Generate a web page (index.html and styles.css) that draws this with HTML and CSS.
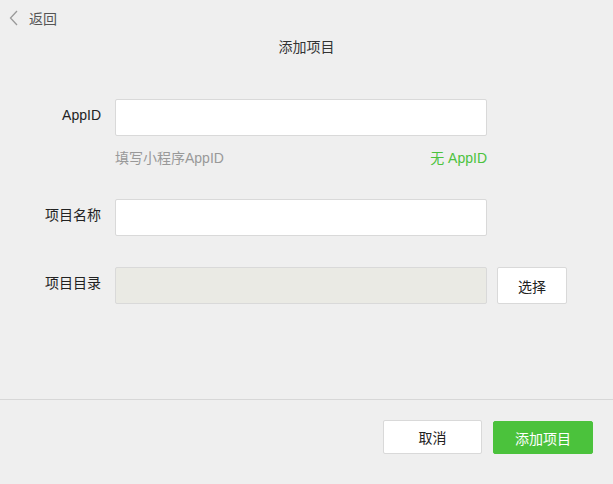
FILE: index.html
```html
<!DOCTYPE html>
<html lang="zh-CN">
  <head>
    <meta charset="UTF-8" />
    <title>添加项目</title>
    <link rel="stylesheet" href="styles.css">
  </head>
  <body>
    <div class="page">
      <div class="topbar">
        <a class="back" href="#">
          <svg width="10" height="16" viewBox="0 0 10 16"><polyline points="8,1 1.5,8 8,15" fill="none" stroke="#9a9a9a" stroke-width="1.3"/></svg>
          <span>返回</span>
        </a>
      </div>
      <div class="title">添加项目</div>

      <div class="form">
        <div class="row">
          <label class="label">AppID</label>
          <input class="field" type="text" />
        </div>
        <div class="hint">
          <span>填写小程序AppID</span>
          <a href="#" class="noid">无 AppID</a>
        </div>
        <div class="row gap">
          <label class="label">项目名称</label>
          <input class="field" type="text" />
        </div>
        <div class="row gap">
          <label class="label">项目目录</label>
          <input class="field disabled" type="text" disabled />
          <button class="btn pick">选择</button>
        </div>
      </div>

      <div class="footer">
        <button class="btn cancel">取消</button>
        <button class="btn primary">添加项目</button>
      </div>
    </div>
  </body>
</html>
```

FILE: styles.css
```css
body {
  margin: 0;
  background-color: #efefef;
  font-family: "Liberation Sans", "Noto Sans CJK SC", sans-serif;
  color: #333;
}
.page {
  width: 613px;
  height: 484px;
  display: flex;
  flex-direction: column;
}
.topbar {
  height: 36px;
  display: flex;
  align-items: center;
  padding-left: 9px;
}
.back {
  display: flex;
  align-items: center;
  color: #555;
  font-size: 14px;
  text-decoration: none;
}
.back svg {
  margin-right: 10px;
}
.title {
  margin-top: 1px;
  text-align: center;
  font-size: 14px;
  line-height: 20px;
  color: #333;
}
.form {
  margin-top: 42px;
}
.row {
  display: flex;
  align-items: flex-start;
}
.row.gap {
  margin-top: 31px;
}
.label {
  width: 101px;
  margin-right: 14px;
  padding-top: 6px;
  text-align: right;
  font-size: 14px;
  line-height: 20px;
  color: #222;
}
.field {
  box-sizing: border-box;
  width: 372px;
  height: 37px;
  margin: 0;
  border: 1px solid #d9d9d9;
  border-radius: 2px;
  background-color: #fff;
  outline: none;
}
.field.disabled {
  background-color: #eaeae4;
}
.hint {
  width: 372px;
  margin: 12px 0 0 115px;
  display: flex;
  justify-content: space-between;
  font-size: 14px;
  line-height: 20px;
  color: #999;
}
.noid {
  color: #4cc23d;
  text-decoration: none;
}
.btn {
  box-sizing: border-box;
  margin: 0;
  border: 1px solid #d9d9d9;
  border-radius: 2px;
  background-color: #fff;
  color: #222;
  font-family: inherit;
  font-size: 14px;
}
.pick {
  width: 70px;
  height: 37px;
  margin-left: 10px;
}
.footer {
  margin-top: 95px;
  border-top: 1px solid #d7d7d7;
  display: flex;
  justify-content: flex-end;
  align-items: flex-start;
  padding: 20px 20px 0 0;
}
.cancel {
  width: 99px;
  height: 34px;
}
.primary {
  width: 100px;
  height: 33px;
  margin-left: 11px;
  margin-top: 1px;
  border-color: #4bc23c;
  background-color: #4bc23c;
  color: #fff;
}
```
